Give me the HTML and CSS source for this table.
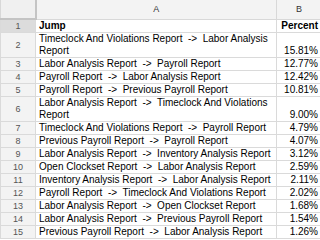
FILE: index.html
```html
<!DOCTYPE html>
<html>
<head>
<meta charset="utf-8">
<link rel="stylesheet" href="styles.css">
</head>
<body>
<table class="sheet">
  <colgroup><col class="c-rn"><col class="c-a"><col class="c-b"></colgroup>
  <thead>
    <tr class="hdr"><th class="corner"></th><th>A</th><th>B</th></tr>
  </thead>
  <tbody>
    <tr class="r1"><td class="rn">1</td><td class="a bold">Jump</td><td class="b bold">Percent</td></tr>
    <tr class="r2"><td class="rn">2</td><td class="a">Timeclock And Violations Report&nbsp; -&gt;&nbsp; Labor Analysis<br>Report</td><td class="b">15.81%</td></tr>
    <tr><td class="rn">3</td><td class="a">Labor Analysis Report&nbsp; -&gt;&nbsp; Payroll Report</td><td class="b">12.77%</td></tr>
    <tr><td class="rn">4</td><td class="a">Payroll Report&nbsp; -&gt;&nbsp; Labor Analysis Report</td><td class="b">12.42%</td></tr>
    <tr><td class="rn">5</td><td class="a">Payroll Report&nbsp; -&gt;&nbsp; Previous Payroll Report</td><td class="b">10.81%</td></tr>
    <tr class="r2"><td class="rn">6</td><td class="a">Labor Analysis Report&nbsp; -&gt;&nbsp; Timeclock And Violations<br>Report</td><td class="b">9.00%</td></tr>
    <tr><td class="rn">7</td><td class="a">Timeclock And Violations Report&nbsp; -&gt;&nbsp; Payroll Report</td><td class="b">4.79%</td></tr>
    <tr><td class="rn">8</td><td class="a">Previous Payroll Report&nbsp; -&gt;&nbsp; Payroll Report</td><td class="b">4.07%</td></tr>
    <tr><td class="rn">9</td><td class="a">Labor Analysis Report&nbsp; -&gt;&nbsp; Inventory Analysis Report</td><td class="b">3.12%</td></tr>
    <tr><td class="rn">10</td><td class="a">Open Clockset Report&nbsp; -&gt;&nbsp; Labor Analysis Report</td><td class="b">2.59%</td></tr>
    <tr><td class="rn">11</td><td class="a">Inventory Analysis Report&nbsp; -&gt;&nbsp; Labor Analysis Report</td><td class="b">2.11%</td></tr>
    <tr><td class="rn">12</td><td class="a">Payroll Report&nbsp; -&gt;&nbsp; Timeclock And Violations Report</td><td class="b">2.02%</td></tr>
    <tr><td class="rn">13</td><td class="a">Labor Analysis Report&nbsp; -&gt;&nbsp; Open Clockset Report</td><td class="b">1.68%</td></tr>
    <tr><td class="rn">14</td><td class="a">Labor Analysis Report&nbsp; -&gt;&nbsp; Previous Payroll Report</td><td class="b">1.54%</td></tr>
    <tr><td class="rn">15</td><td class="a">Previous Payroll Report&nbsp; -&gt;&nbsp; Labor Analysis Report</td><td class="b">1.26%</td></tr>
  </tbody>
</table>
</body>
</html>
```

FILE: styles.css
```css
html, body {
  margin: 0;
  padding: 0;
  background: #fff;
  overflow: hidden;
}
.sheet {
  border-collapse: collapse;
  table-layout: fixed;
  width: 321px;
  margin-top: -1px;
  font-family: "Liberation Sans", Arial, sans-serif;
  font-size: 10px;
  color: #000;
}
.c-rn { width: 35px; }
.c-a { width: 241px; }
.c-b { width: 45px; }
.sheet th, .sheet td {
  border: 1px solid #dadada;
  padding: 0 3px;
  line-height: 12px;
  overflow: hidden;
  white-space: nowrap;
}
.hdr th {
  height: 18px;
  background: #f3f3f3;
  color: #333;
  font-weight: normal;
  font-size: 9px;
  text-align: center;
  border-color: #d8d8d8;
  padding: 0;
}
.hdr .corner {
  background: #f0f0f0;
  border-right: 2px solid #c4c4c4;
  border-bottom: 2px solid #c4c4c4;
}
.sheet td {
  height: 12px;
  vertical-align: bottom;
}
.r2 td { height: 24px; }
.rn {
  background: #f3f3f3;
  color: #555;
  font-size: 9px;
  text-align: center;
  vertical-align: middle !important;
}
.r1 .rn { background: #dcdcdc; }
.a { text-align: left; }
.b { text-align: right; }
.bold { font-weight: bold; }
```
